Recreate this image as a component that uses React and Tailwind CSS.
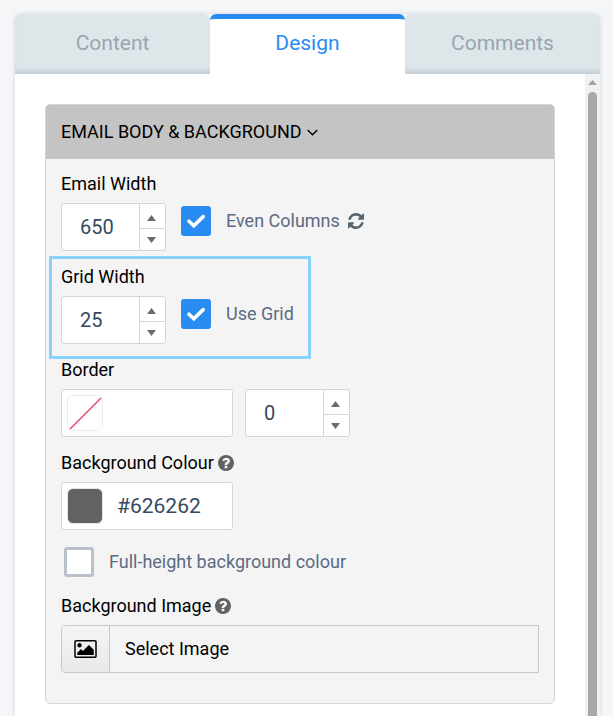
import { useState } from 'react'
import clsx from 'clsx'

const TABS = ['Content', 'Design', 'Comments']

function RefreshIcon() {
  return (
    <svg viewBox="0 128 1536 1536" className="size-4" fill="currentColor" aria-hidden="true">
      <path d="M1511 1056q0 5-1 7-64 268-268 434.5t-478 166.5q-146 0-282.5-55t-243.5-157l-129 129q-19 19-45 19t-45-19-19-45v-448q0-26 19-45t45-19h448q26 0 45 19t19 45-19 45l-137 137q71 66 161 102t187 36q134 0 250-65t186-179q11-17 53-117 8-23 30-23h192q13 0 22.5 9.5t9.5 22.5zm25-800v448q0 26-19 45t-45 19h-448q-26 0-45-19t-19-45 19-45l138-138q-148-137-349-137-134 0-250 65t-186 179q-11 17-53 117-8 23-30 23h-199q-13 0-22.5-9.5t-9.5-22.5v-7q65-268 270-434.5t480-166.5q146 0 284 55.5t245 156.5l130-129q19-19 45-19t45 19 19 45z" />
    </svg>
  )
}

function HelpIcon() {
  return (
    <svg viewBox="128 128 1536 1536" className="size-4 text-[#626262]" fill="currentColor" aria-hidden="true">
      <path d="M1024 1376v-192q0-14-9-23t-23-9h-192q-14 0-23 9t-9 23v192q0 14 9 23t23 9h192q14 0 23-9t9-23zm256-672q0-88-55.5-163t-138.5-116-170-41q-243 0-371 213-15 24 8 42l132 100q7 6 19 6 16 0 25-12 53-68 86-92 34-24 86-24 48 0 85.5 26t37.5 59q0 38-20 61t-68 45q-63 28-115.5 86.5t-52.5 125.5v36q0 14 9 23t23 9h192q14 0 23-9t9-23q0-19 21.5-49.5t54.5-49.5q32-18 49-28.5t46-35 44.5-48 28-60.5 12.5-81zm384 192q0 209-103 385.5t-279.5 279.5-385.5 103-385.5-103-279.5-279.5-103-385.5 103-385.5 279.5-279.5 385.5-103 385.5 103 279.5 279.5 103 385.5z" />
    </svg>
  )
}

function PictureIcon() {
  return (
    <svg viewBox="-64 128 1920 1536" className="h-[18px] w-[23px]" fill="currentColor" aria-hidden="true">
      <path d="M576 576q0 80-56 136t-136 56-136-56-56-136 56-136 136-56 136 56 56 136zm1024 384v448h-1408v-192l320-320 160 160 512-512zm96-704h-1600q-13 0-22.5 9.5t-9.5 22.5v1216q0 13 9.5 22.5t22.5 9.5h1600q13 0 22.5-9.5t9.5-22.5v-1216q0-13-9.5-22.5t-22.5-9.5zm160 32v1216q0 66-47 113t-113 47h-1600q-66 0-113-47t-47-113v-1216q0-66 47-113t113-47h1600q66 0 113 47t47 113z" />
    </svg>
  )
}

function NumberField({ id, label, value, onChange }) {
  const step = (by) => onChange(Math.max(0, Number(value) + by))

  return (
    <div className="flex h-12 w-[105px] rounded-[3px] border border-[#d3d7dc] bg-white">
      <input
        id={id}
        type="number"
        aria-label={label}
        value={value}
        onChange={(e) => onChange(e.target.value)}
        className="w-0 flex-1 appearance-none bg-transparent pl-[18px] text-xl text-[#34495e] outline-none [-moz-appearance:textfield] [&::-webkit-inner-spin-button]:appearance-none"
      />
      <div className="flex w-[26px] flex-col border-l border-[#d3d7dc] text-[#6b6b6b]">
        <button
          type="button"
          aria-label="Increase"
          onClick={() => step(1)}
          className="flex flex-1 items-center justify-center border-b border-[#d3d7dc] pt-1 pr-0.5"
        >
          <svg viewBox="0 0 9 6" className="h-1.5 w-[9px]" fill="currentColor"><path d="M4.5 0 9 6H0z" /></svg>
        </button>
        <button
          type="button"
          aria-label="Decrease"
          onClick={() => step(-1)}
          className="flex flex-1 items-center justify-center pt-0.5 pr-0.5"
        >
          <svg viewBox="0 0 9 6" className="h-1.5 w-[9px]" fill="currentColor"><path d="M4.5 6 9 0H0z" /></svg>
        </button>
      </div>
    </div>
  )
}

function Checkbox({ label, checked, onChange }) {
  return (
    <label className="flex items-center gap-[15px] text-lg text-[#5b6b82]">
      <span className="grid size-[30px]">
        <input
          type="checkbox"
          checked={checked}
          onChange={(e) => onChange(e.target.checked)}
          className="col-start-1 row-start-1 size-[30px] appearance-none rounded-[3px] border-3 border-[#b8c1c9] bg-white checked:border-[#288cf0] checked:bg-[#288cf0]"
        />
        {checked && (
          <svg
            viewBox="0 0 30 30"
            className="pointer-events-none col-start-1 row-start-1 size-[30px]"
            fill="none"
            stroke="#fff"
            strokeWidth="3.6"
          >
            <path d="M8 15.2 12.8 19.8 22.2 10.6" strokeLinecap="round" />
          </svg>
        )}
      </span>
      {label}
    </label>
  )
}

function Tabs({ active, onSelect }) {
  return (
    <div role="tablist" className="flex h-[60px] shrink-0">
      {TABS.map((tab) => (
        <button
          key={tab}
          type="button"
          role="tab"
          aria-selected={tab === active}
          onClick={() => onSelect(tab)}
          className={clsx(
            'flex-1 rounded-t-md text-[21px]',
            tab === active
              ? 'border-t-5 border-[#288cf0] bg-white pb-[5px] text-[#288cf0]'
              : 'bg-[#dfe6e9] text-[#98a5b2] shadow-[inset_0_-7px_7px_-5px_#b9c2cf]',
          )}
        >
          {tab}
        </button>
      ))}
    </div>
  )
}

export default function App() {
  const [tab, setTab] = useState('Design')
  const [emailWidth, setEmailWidth] = useState(650)
  const [gridWidth, setGridWidth] = useState(25)
  const [borderWidth, setBorderWidth] = useState(0)
  const [background, setBackground] = useState('#626262')
  const [evenColumns, setEvenColumns] = useState(true)
  const [useGrid, setUseGrid] = useState(true)
  const [fullHeight, setFullHeight] = useState(false)

  return (
    <div className="flex h-screen flex-col overflow-hidden bg-[#f5f6f8] pt-3.5 pr-[13px] pl-[15px] font-[Roboto,sans-serif]">
      <div className="flex min-h-0 flex-1 flex-col rounded-t-md shadow-[0_0_4px_#cfd4da]">
        <Tabs active={tab} onSelect={setTab} />

        <div className="flex min-h-0 flex-1 bg-white">
          <main className="min-w-0 flex-1 px-[30px] pt-[30px]">
            <section className="rounded-[5px] border border-[#d4d6d7] bg-[#f4f4f4] text-lg text-black">
              <button
                type="button"
                className="flex h-[54px] w-full items-center gap-[5px] rounded-t-[4px] bg-[#c4c4c4] px-[15px]"
              >
                EMAIL BODY &amp; BACKGROUND
                <svg viewBox="0 0 11 7" className="h-[7px] w-[11px]" fill="none" stroke="currentColor" strokeWidth="1.4">
                  <path d="M0.7 1 5.5 5.8 10.3 1" />
                </svg>
              </button>

              <div className="flex flex-col gap-3.5 px-[15px] pt-[13px] pb-[30px] leading-6">
                <div className="flex flex-col gap-[7px]">
                  <label htmlFor="email-width">Email Width</label>
                  <div className="flex gap-[15px]">
                    <NumberField id="email-width" value={emailWidth} onChange={setEmailWidth} />
                    <div className="flex items-center gap-2 pb-3 text-[#5b6b82]">
                      <Checkbox label="Even Columns" checked={evenColumns} onChange={setEvenColumns} />
                      <button type="button" aria-label="Reset columns" className="text-[#5a646e]">
                        <RefreshIcon />
                      </button>
                    </div>
                  </div>
                </div>

                <div className="relative flex w-fit flex-col gap-[7px]">
                  <div className="pointer-events-none absolute -top-[9px] -right-[17px] -bottom-[15px] -left-3 border-3 border-[#87d3fd]" />
                  <label htmlFor="grid-width">Grid Width</label>
                  <div className="flex gap-[15px]">
                    <NumberField id="grid-width" value={gridWidth} onChange={setGridWidth} />
                    <div className="flex items-center pb-3">
                      <Checkbox label="Use Grid" checked={useGrid} onChange={setUseGrid} />
                    </div>
                  </div>
                </div>

                <div className="flex flex-col gap-[7px]">
                  <span>Border</span>
                  <div className="flex gap-3">
                    <button
                      type="button"
                      aria-label="Border colour"
                      className="flex h-12 w-[172px] items-center rounded-[3px] border border-[#d3d7dc] bg-white px-[5px]"
                    >
                      <svg viewBox="0 0 36 36" className="size-9" fill="none">
                        <rect x="0.5" y="0.5" width="35" height="35" rx="5" stroke="#ebebeb" />
                        <path d="M3 34 34 3" stroke="#e8506e" strokeWidth="1.6" />
                      </svg>
                    </button>
                    <NumberField label="Border width" value={borderWidth} onChange={setBorderWidth} />
                  </div>
                </div>

                <div className="flex flex-col gap-[7px]">
                  <label htmlFor="background-colour" className="flex items-center gap-1">
                    Background Colour <HelpIcon />
                  </label>
                  <div className="flex h-12 w-[172px] items-center gap-3.5 rounded-[3px] border border-[#d3d7dc] bg-white px-[5px]">
                    <span
                      className="size-9 shrink-0 rounded-md border border-[#e4e4e4]"
                      style={{ backgroundColor: background }}
                    />
                    <input
                      id="background-colour"
                      type="text"
                      value={background}
                      onChange={(e) => setBackground(e.target.value)}
                      className="w-0 flex-1 bg-transparent text-[21px] text-[#34495e] outline-none"
                    />
                  </div>
                </div>

                <div className="py-[3px] pl-[3px]">
                  <Checkbox label="Full-height background colour" checked={fullHeight} onChange={setFullHeight} />
                </div>

                <div className="flex flex-col gap-[7px]">
                  <span className="flex items-center gap-1">
                    Background Image <HelpIcon />
                  </span>
                  <button
                    type="button"
                    className="flex h-12 items-stretch rounded-l-[4px] border border-[#c3cacd] text-left"
                  >
                    <span className="flex w-12 items-center justify-center rounded-l-[3px] border-r border-[#c3cacd] bg-linear-to-b from-[#f4f4f4] to-[#e9e9e9]">
                      <PictureIcon />
                    </span>
                    <span className="self-center pl-[15px]">Select Image</span>
                  </button>
                </div>
              </div>
            </section>
          </main>

          {/* Scroll track */}
          <div className="flex w-[15px] flex-col items-center bg-[#f1f1f1] pt-1.5 text-[#a0a0a0]">
            <svg viewBox="0 0 9 5" className="h-[5px] w-[9px]" fill="currentColor"><path d="M4.5 0 9 5H0z" /></svg>
            <div className="mt-[7px] w-[9px] flex-1 rounded-t-full bg-[#a8a8a8]" />
          </div>
        </div>
      </div>
    </div>
  )
}
